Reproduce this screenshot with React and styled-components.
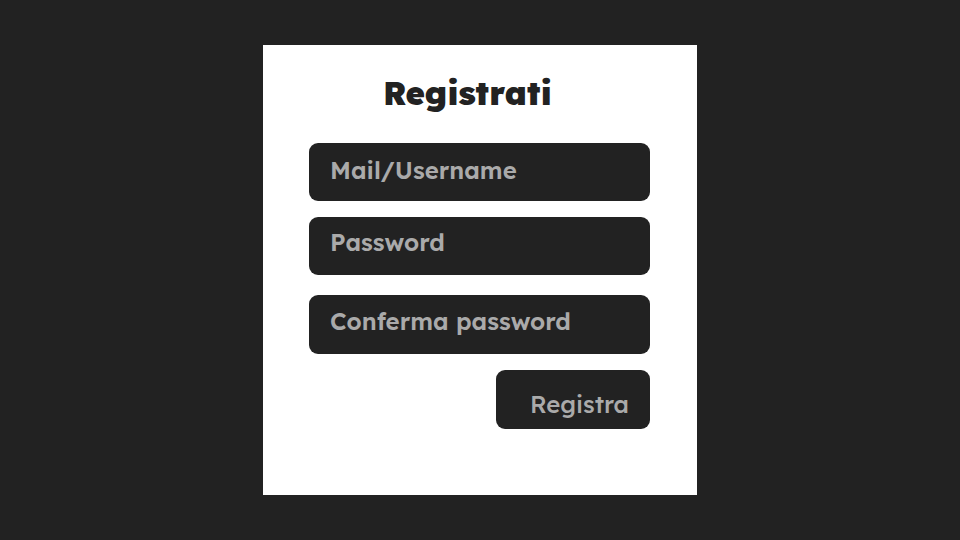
import React from 'react';
import styled, { createGlobalStyle } from 'styled-components';

const fontStack = 'Lexend, Lato, "Open Sans", sans-serif';

const GlobalStyle = createGlobalStyle`
  *, *::before, *::after { box-sizing: border-box; }
  body { margin: 0; background: #222222; font-family: ${fontStack}; }
`;

const Page = styled.main`
  min-height: 100vh;
  display: flex;
  align-items: center;
  justify-content: center;
`;

const Card = styled.form`
  width: 100%;
  max-width: 434px;
  min-height: 450px;
  padding: 24px 47px 66px 46px;
  display: flex;
  flex-direction: column;
  background: #ffffff;
`;

const Title = styled.h1`
  margin: 0 24px 26px 0;
  font-size: 33px;
  line-height: 48px;
  font-weight: 900;
  text-align: center;
  color: #222222;
`;

const Field = styled.input`
  width: 100%;
  height: ${({ $tall }) => ($tall ? 59 : 58)}px;
  margin-bottom: ${({ $gap }) => $gap}px;
  padding: 0 21px ${({ $lift }) => $lift}px;
  border: 0;
  border-radius: 9px;
  background: #222222;
  color: #aaaaaa;
  font: 600 24px/32px ${fontStack};
  &::placeholder { color: #aaaaaa; opacity: 1; }
`;

const Submit = styled.button`
  align-self: flex-end;
  height: 59px;
  padding: 8px 21px 0 34px;
  border: 0;
  border-radius: 9px;
  background: #222222;
  color: #aaaaaa;
  font: 500 24px/32px ${fontStack};
  text-align: right;
  cursor: pointer;
`;

export default function App() {
  return (
    <Page>
      <GlobalStyle />
      <Card onSubmit={(e) => e.preventDefault()}>
        <Title>Registrati</Title>
        <Field $gap={16} $lift={4} type="text" placeholder="Mail/Username" aria-label="Mail/Username" />
        <Field $gap={20} $lift={8} type="password" placeholder="Password" aria-label="Password" />
        <Field $gap={16} $lift={8} $tall type="password" placeholder="Conferma password" aria-label="Conferma password" />
        <Submit type="submit">Registra</Submit>
      </Card>
    </Page>
  );
}
